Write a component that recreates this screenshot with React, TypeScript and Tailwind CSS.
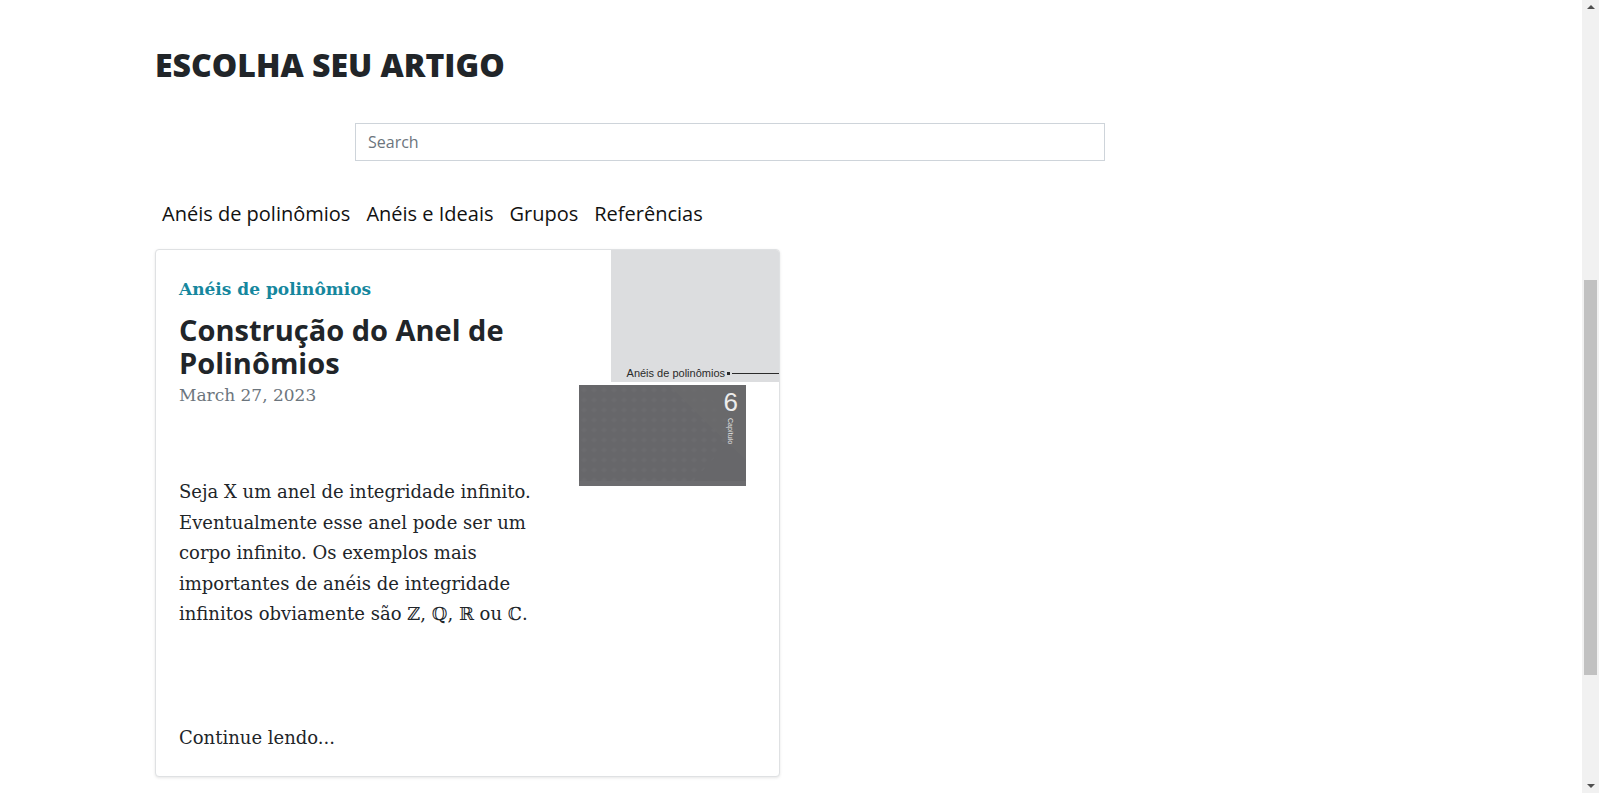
import React from "react";

const navItems = ["Anéis de polinômios", "Anéis e Ideais", "Grupos", "Referências"];

const bodyLines = [
  "Seja X um anel de integridade infinito.",
  "Eventualmente esse anel pode ser um",
  "corpo infinito. Os exemplos mais",
  "importantes de anéis de integridade",
];

function ChapterCover() {
  return (
    <div className="flex w-[200px] shrink-0 flex-col">
      <div className="ml-[32px] flex h-[132px] flex-col justify-end bg-[#dcdddf] pb-[2px]">
        <div className="flex items-center justify-end">
          <span className="font-['Liberation_Sans',sans-serif] text-[11px] leading-[13px] text-[#2a2a2a]">
            Anéis de polinômios
          </span>
          <span className="ml-[2px] size-[3px] bg-[#2a2a2a]" />
          <span className="ml-[2px] h-px w-[47px] bg-[#2a2a2a]" />
        </div>
      </div>
      <div className="relative mt-[3px] h-[101px] w-[167px] overflow-hidden bg-[#67676a]">
        <svg width="167" height="101" viewBox="0 0 167 101" className="block">
          <defs>
            <pattern id="dots" width="10" height="10" patternUnits="userSpaceOnUse">
              <rect x="3" y="3" width="4" height="4" transform="rotate(45 5 5)" fill="#6c6c6f" />
            </pattern>
          </defs>
          <rect width="167" height="101" fill="#67676a" />
          <polygon points="0,0 120,0 160,45 110,101 0,101" fill="url(#dots)" opacity="0.7" />
          <polygon points="90,0 167,0 167,75 135,45" fill="#6a6a6d" opacity="0.6" />
          <rect y="96" width="167" height="5" fill="#6c6c6f" />
        </svg>
        <span className="absolute right-[8px] top-[3px] font-['Liberation_Sans',sans-serif] text-[26px] font-light leading-[28px] text-[#ececec]">
          6
        </span>
        <span className="absolute right-[12px] top-[33px] font-['Liberation_Sans',sans-serif] text-[7px] leading-[8px] text-[#e5e5e5] [writing-mode:vertical-rl]">
          Capítulo
        </span>
      </div>
    </div>
  );
}

function ArticleCard() {
  return (
    <div className="flex h-[528px] w-[625px] overflow-hidden rounded-[4px] border border-[#dfe1e3] bg-white shadow-[0_1px_3px_rgba(0,0,0,0.1)]">
      <div className="flex flex-1 flex-col pl-[23px] pt-[27px] font-['DejaVu_Serif',serif] text-[#212529]">
        <p className="text-[17px] font-bold leading-[24px] text-[#16879e]">Anéis de polinômios</p>
        <h2 className="mt-[12px] font-['Open_Sans',sans-serif] text-[29px] font-bold leading-[33px] text-[#212529]">
          Construção do Anel de
          <br />
          Polinômios
        </h2>
        <p className="mt-[4px] text-[17px] leading-[24px] text-[#6c757d]">March 27, 2023</p>
        <div className="mt-[70px] text-[18px] leading-[30.5px]">
          {bodyLines.map((line) => (
            <p key={line} className="whitespace-nowrap">
              {line}
            </p>
          ))}
          <p className="whitespace-nowrap">infinitos obviamente são ℤ, ℚ, ℝ ou ℂ.</p>
        </div>
        <a href="#" className="mt-[93px] text-[18px] leading-[30px] text-[#212529]">
          Continue lendo...
        </a>
      </div>
      <ChapterCover />
    </div>
  );
}

function FakeScrollbar() {
  return (
    <div className="flex h-full w-[17px] shrink-0 flex-col items-center bg-[#f1f1f1]">
      <div className="mt-[5px] h-0 w-0 border-x-[4px] border-b-[4px] border-x-transparent border-b-[#505050]" />
      <div className="mt-[271px] h-[395px] w-[13px] bg-[#c1c1c1]" />
      <div className="mt-auto mb-[5px] h-0 w-0 border-x-[4px] border-t-[4px] border-x-transparent border-t-[#505050]" />
    </div>
  );
}

export default function App() {
  return (
    <div className="flex h-[793px] overflow-hidden bg-white font-['Open_Sans',sans-serif]">
      <main className="flex-1 pl-[155px]">
        <h1 className="mt-[46px] text-[32px] font-extrabold leading-[38px] text-[#212529]">
          ESCOLHA SEU ARTIGO
        </h1>
        <div className="ml-[200px] mt-[39px] w-[750px]">
          <input
            type="text"
            placeholder="Search"
            className="block h-[38px] w-full border border-[#ced4da] bg-white px-[12px] text-[16px] text-[#212529] outline-none placeholder:text-[#6c757d]"
          />
        </div>
        <nav className="-ml-px mt-[38px] flex">
          {navItems.map((item) => (
            <a key={item} href="#" className="px-[8px] text-[20px] leading-[30px] text-[#111]">
              {item}
            </a>
          ))}
        </nav>
        <div className="mt-[20px]">
          <ArticleCard />
        </div>
      </main>
      <FakeScrollbar />
    </div>
  );
}
